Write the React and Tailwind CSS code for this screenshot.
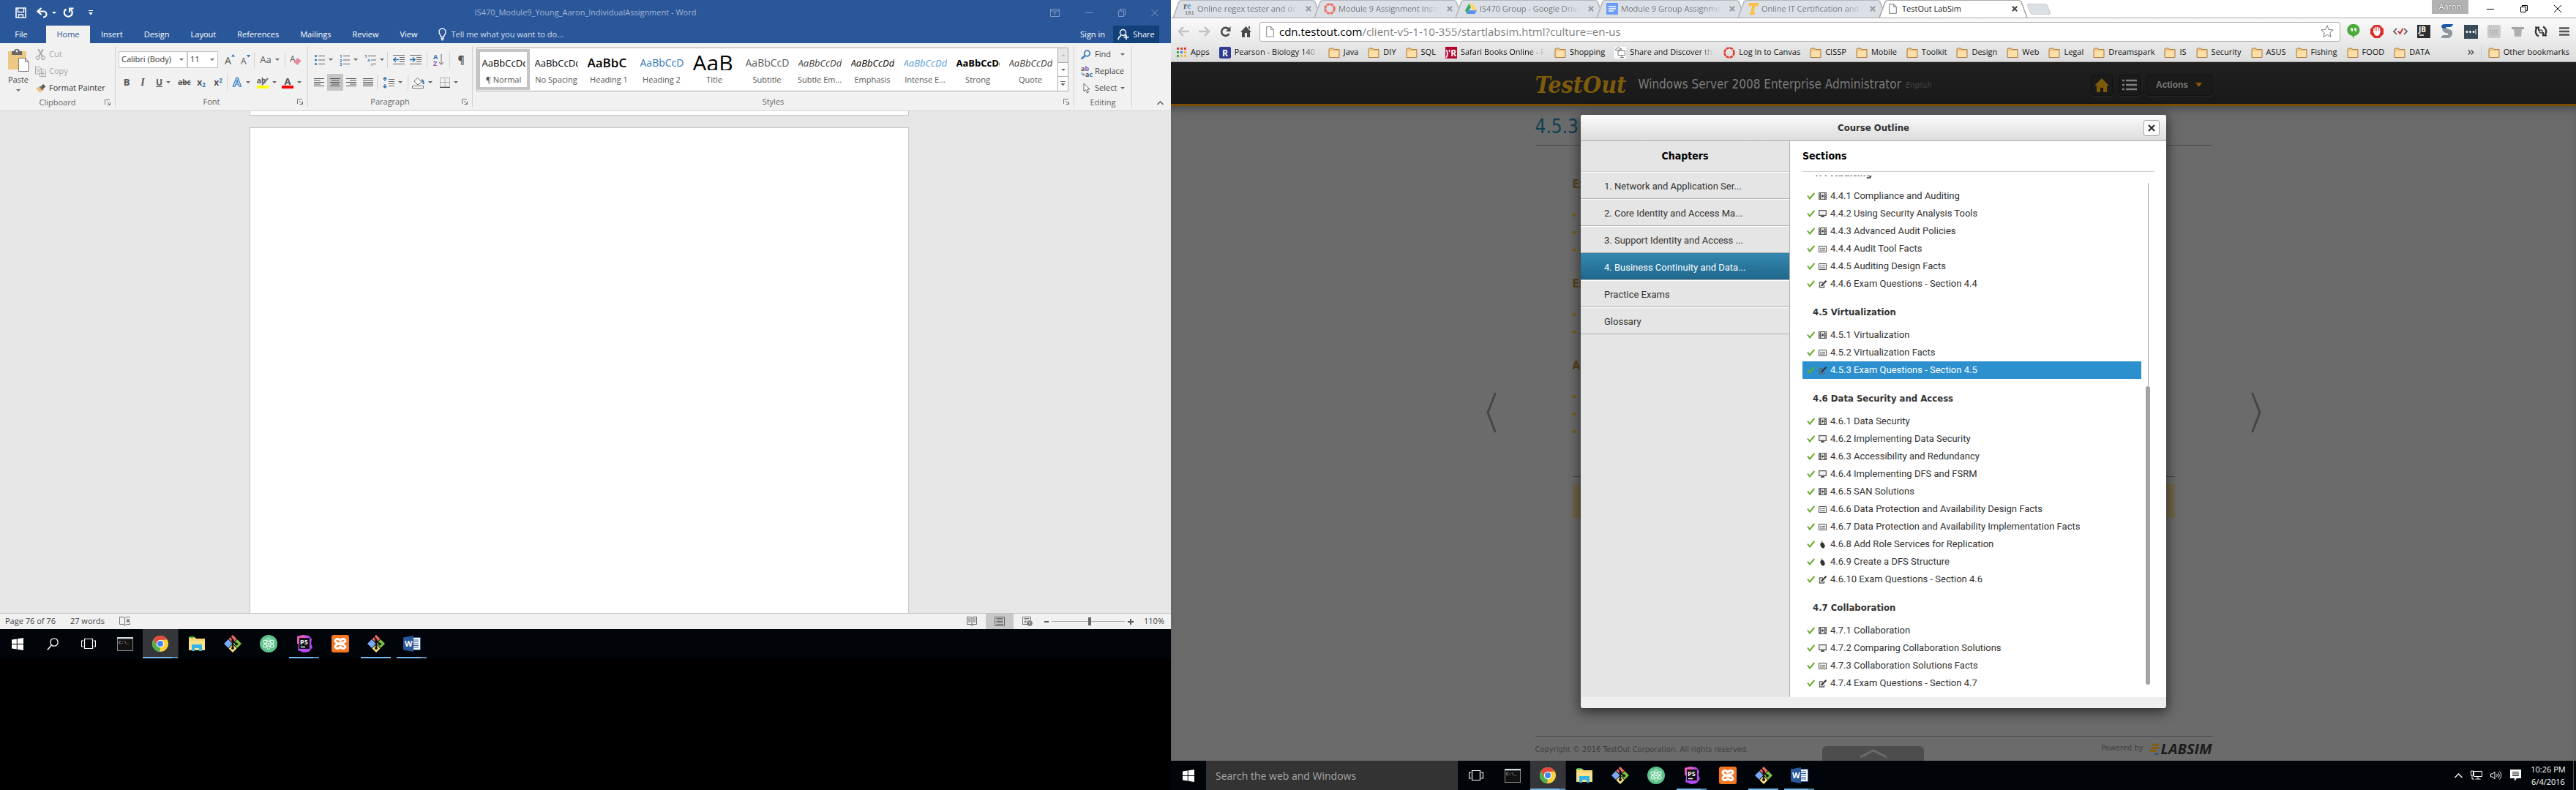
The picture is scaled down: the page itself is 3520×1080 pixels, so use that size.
import React from "react";

const UI = "font-['Open_Sans',sans-serif]";
const TAHOMA = "font-['DejaVu_Sans_Condensed','DejaVu_Sans',sans-serif]";

/* ---------- Shared small drawings ---------- */

function Caret({ className = "text-[#666]" }) {
  return (
    <svg viewBox="0 0 6 3" className={`h-[3px] w-[6px] shrink-0 ${className}`} fill="currentColor" aria-hidden="true">
      <path d="M0 0h6L3 3z" />
    </svg>
  );
}

function Svg({ w = 16, h = 16, box, className = "", children }) {
  return (
    <svg width={w} height={h} viewBox={box || `0 0 ${w} ${h}`} className={`shrink-0 ${className}`} fill="none" aria-hidden="true">
      {children}
    </svg>
  );
}

/* ---------- Word: title bar and tabs ---------- */

function WordTitle() {
  return (
    <div className="grid h-[35px] grid-cols-[1fr_auto_1fr] items-center text-white">
      <div className="flex items-center pl-[21px]">
        <button aria-label="Save" className="mr-[14px]">
          <Svg w={15} h={15}><path d="M1 1h13v13H1z" stroke="#fff" strokeWidth="1.6" /><path d="M3.5 1v5.5h8V1M4.500 14v-4h6v4" stroke="#fff" strokeWidth="1.4" /></Svg>
        </button>
        <button aria-label="Undo" className="mr-[5px]">
          <Svg w={16} h={15}><path d="M2 5.500h7.500a4 4 0 0 1 0 8H9" stroke="#fff" strokeWidth="2.200" /><path d="M6.500 1 1.500 5.500l5 4.500" stroke="#fff" strokeWidth="2.200" /></Svg>
        </button>
        <Caret className="mr-[9px] text-white" />
        <button aria-label="Redo" className="mr-[20px]">
          <Svg w={15} h={15}><path d="M4.500 2.500a5.500 5.500 0 1 0 6 .3" stroke="#fff" strokeWidth="2.200" /><path d="M9 7V1.600h5.500" stroke="#fff" strokeWidth="2" /></Svg>
        </button>
        <button aria-label="Customize Quick Access Toolbar">
          <Svg w={6} h={7}><path d="M0 .5h6" stroke="#fff" /><path d="M0 3h6L3 6.500z" fill="#fff" /></Svg>
        </button>
      </div>
      <div className="text-[11px] text-[#a3b5d3]">IS470_Module9_Young_Aaron_IndividualAssignment - Word</div>
      <div className="flex items-center justify-end gap-[35px] pr-[17px] text-[#7f99c2]">
        <button aria-label="Ribbon display options"><Svg w={13} h={11}><path d="M.5.5h12v10H.5zM.5 3h12M6.500 9V5M4.500 6.500l2-2 2 2" stroke="currentColor" /></Svg></button>
        <button aria-label="Minimize"><Svg w={10} h={11}><path d="M0 5.500h10" stroke="currentColor" /></Svg></button>
        <button aria-label="Restore"><Svg w={10} h={11}><path d="M.5 3h7v7.500h-7zM2.500 3V.5h7V8h-2" stroke="currentColor" /></Svg></button>
        <button aria-label="Close"><Svg w={10} h={11}><path d="M0 .5l10 10M10 .5l-10 10" stroke="currentColor" /></Svg></button>
      </div>
    </div>
  );
}

const wordTabs = ["Insert", "Design", "Layout", "References", "Mailings", "Review", "View"];

function WordTabs() {
  return (
    <nav className="flex h-[24px] items-stretch text-[11px] text-white">
      <button className="w-[63px] pr-[5px] text-center">File</button>
      <button className="mr-[15px] w-[60px] bg-[#f1f1f1] text-[#2a579a]">Home</button>
      <div className="flex gap-[29px]">
        {wordTabs.map((t) => <button key={t}>{t}</button>)}
      </div>
      <label className="ml-[29px] flex items-center gap-[6px] text-[#d5deeb]">
        <Svg w={11} h={18}><path d="M3.500 12.500c0-3-2.500-3.500-2.500-7a4.500 4.500 0 0 1 9 0c0 3.500-2.500 4-2.500 7zM3.500 14.500h4M4 16.500h3" stroke="#fff" strokeWidth="1.300" /></Svg>
        <input aria-label="Tell me" placeholder="Tell me what you want to do..." className="w-[200px] bg-transparent placeholder:text-[#d5deeb] outline-none" />
      </label>
      <div className="flex-1" />
      <button className="mr-[11px]">Sign in</button>
      <button className="mr-4 flex w-[63px] items-center justify-center gap-[5px] bg-[#124078]">
        <Svg w={16} h={16}><circle cx="7.500" cy="5.500" r="4" stroke="#fff" strokeWidth="1.500" /><path d="M1 15.500c0-3 1.500-4.500 4-6M9.500 9l1.500 1M12 8.500v7M8.500 12h7" stroke="#fff" strokeWidth="1.500" /></Svg>
        Share
      </button>
    </nav>
  );
}

/* ---------- Word: ribbon ---------- */

function Group({ label, className, launcher = true, children }) {
  return (
    <section aria-label={label} className={`my-1 flex flex-col border-r border-[#d4d4d4] ${className}`}>
      <div className="h-[72px]">{children}</div>
      <div className="grid grid-cols-[14px_1fr_14px] items-center text-[11px] text-[#666]">
        <span />
        <span className="text-center leading-4">{label}</span>
        {launcher && (
          <button aria-label={`${label} settings`}>
            <Svg w={8} h={8}><path d="M.5 7V.5H7M3 3l4 4M7.500 3.500v4h-4" stroke="#777" /></Svg>
          </button>
        )}
      </div>
    </section>
  );
}

const Sep = () => <span className="h-[22px] w-px shrink-0 bg-[#d4d4d4]" />;

function Tool({ label, w, caret, active, children }) {
  return (
    <button aria-label={label} className={`flex h-[23px] shrink-0 items-center justify-center gap-[5px] text-[#555] ${w} ${active ? "bg-[#c5c5c5]" : ""}`}>
      {children}
      {caret && <Caret />}
    </button>
  );
}

function Lines({ rows, stroke = "#555" }) {
  return (
    <Svg w={14} h={12}>
      {rows.map(([a, b], i) => <path key={i} d={`M${a} ${i * 2.500 + 0.5}H${b}`} stroke={stroke} />)}
    </Svg>
  );
}

function FontGroup() {
  return (
    <div className="flex flex-col gap-2 pl-1 pt-[7px]">
      <div className="flex items-center">
        <div className="relative">
          <select aria-label="Font" className="h-[23px] w-[94px] appearance-none border border-[#c6c6c6] bg-white pl-[3px] text-[11px] text-[#333]"><option>Calibri (Body)</option></select>
          <Caret className="pointer-events-none absolute right-[5px] top-[10px] text-[#666]" />
        </div>
        <div className="relative mr-[5px]">
          <select aria-label="Font size" className="h-[23px] w-[42px] appearance-none border border-[#c6c6c6] bg-white pl-[3px] text-[11px] text-[#333]"><option>11</option></select>
          <Caret className="pointer-events-none absolute right-[5px] top-[10px] text-[#666]" />
        </div>
        <Tool label="Grow font" w="w-[22px]"><Svg w={14} h={15}><text x="0" y="14" fontSize="14" fill="#555" fontFamily="Open Sans">A</text><path d="M9 3.500h5L11.500 0z" fill="#2f74b5" /></Svg></Tool>
        <Tool label="Shrink font" w="w-[22px]"><Svg w={14} h={15}><text x="0" y="14" fontSize="12" fill="#555" fontFamily="Open Sans">A</text><path d="M8 1h5l-2.500 3.500z" fill="#2f74b5" /></Svg></Tool>
        <Sep />
        <Tool label="Change case" w="w-[41px]" caret><span className="text-[13px]">Aa</span></Tool>
        <Sep />
        <Tool label="Clear formatting" w="w-[28px]"><Svg w={16} h={16}><text x="0" y="11" fontSize="12" fill="#555" fontFamily="Open Sans">A</text><path d="M10.500 5l5 4-5 6-5-4z" fill="#e8899a" /></Svg></Tool>
      </div>
      <div className="flex items-center">
        <Tool label="Bold" w="w-[22px]"><b className="text-[13px]">B</b></Tool>
        <Tool label="Italic" w="w-[22px]"><b className="font-['Liberation_Serif',serif] text-[14px] italic">I</b></Tool>
        <Tool label="Underline" w="w-[34px]" caret><b className="text-[12px] underline">U</b></Tool>
        <Tool label="Strikethrough" w="w-[24px]"><b className="text-[10px] line-through">abc</b></Tool>
        <Tool label="Subscript" w="w-[22px]"><b className="text-[12px]">x<sub className="text-[8px] text-[#2f74b5]">2</sub></b></Tool>
        <Tool label="Superscript" w="w-[24px]"><b className="text-[12px]">x<sup className="text-[8px] text-[#2f74b5]">2</sup></b></Tool>
        <Sep />
        <Tool label="Text effects" w="w-[36px]" caret><Svg w={14} h={15}><path d="M1.500 13 6 1.500h2L12.500 13H10L9 10H5l-1 3zM6 7.500h2L7 4.500z" fill="#fff" stroke="#3f7fc1" strokeWidth="1.300" /></Svg></Tool>
        <Tool label="Highlight" w="w-[34px]" caret><Svg w={16} h={16}><text x="0" y="9" fontSize="10" fontWeight="700" fill="#555" fontFamily="Open Sans">ab</text><path d="M15 2 9 9l-2 2" stroke="#777" strokeWidth="2" /><path d="M0 12h16v4H0z" fill="#ff0" /></Svg></Tool>
        <Tool label="Font color" w="w-[34px]" caret><Svg w={16} h={16}><text x="3.500" y="11" fontSize="13" fontWeight="700" fill="#555" fontFamily="Open Sans">A</text><path d="M0 12h16v4H0z" fill="#f00" /></Svg></Tool>
      </div>
    </div>
  );
}

function ListIcon({ numbers }) {
  return (
    <Svg w={14} h={16}>
      {[2.5, 8, 13.500].map((y, i) => (
        <g key={y}>
          {numbers ? <text x="0" y={y + 2.500} fontSize="6" fontWeight="700" fill="#2f74b5" fontFamily="Open Sans">{i + 1}</text> : <circle cx="1.500" cy={y} r="1.500" fill="#2f74b5" />}
          <path d={`M5 ${y}h9`} stroke="#666" />
        </g>
      ))}
    </Svg>
  );
}

function IndentIcon({ right }) {
  return (
    <Svg w={16} h={13}>
      <path d="M0 .5h16M9 3.500h7M9 6.500h7M9 9.500h7M0 12.500h16" stroke="#666" />
      <path d={right ? "M0 6.500h7M4 3.500l3 3-3 3" : "M8 6.500H1M4 3.500l-3 3 3 3"} stroke="#2f74b5" strokeWidth="1.600" />
    </Svg>
  );
}

function ParagraphGroup() {
  return (
    <div className="flex flex-col gap-2 pl-1 pt-[7px]">
      <div className="flex items-center">
        <Tool label="Bullets" w="w-[34px]" caret><ListIcon /></Tool>
        <Tool label="Numbering" w="w-[34px]" caret><ListIcon numbers /></Tool>
        <Tool label="Multilevel list" w="w-[36px]" caret><Svg w={16} h={16}><g fontSize="6" fontWeight="700" fill="#2f74b5" fontFamily="Open Sans"><text x="0" y="5">1</text><text x="4" y="10">a</text><text x="9" y="16">i</text></g><path d="M5 2.500h11M9 8h7M12 13.500h4" stroke="#666" /></Svg></Tool>
        <Sep />
        <span className="w-1" />
        <Tool label="Decrease indent" w="w-[22px]"><IndentIcon /></Tool>
        <Tool label="Increase indent" w="w-[24px]"><IndentIcon right /></Tool>
        <span className="w-[3px]" />
        <Sep />
        <Tool label="Sort" w="w-[30px]"><Svg w={14} h={16}><g fontSize="9" fontWeight="700" fontFamily="Open Sans"><text x="0" y="7" fill="#2f74b5">A</text><text x="0" y="16" fill="#8e5bb5">Z</text></g><path d="M11 0v14M8 11l3 3.500 3-3.500" stroke="#666" /></Svg></Tool>
        <Sep />
        <Tool label="Show paragraph marks" w="w-[30px]"><b className="text-[14px]">¶</b></Tool>
      </div>
      <div className="flex items-center">
        <Tool label="Align left" w="w-[22px]"><Lines rows={[[0, 14], [0, 9], [0, 14], [0, 9], [0, 14]]} /></Tool>
        <Tool label="Center" w="w-[22px]" active><Lines rows={[[0, 14], [2, 12], [0, 14], [2, 12], [0, 14]]} /></Tool>
        <Tool label="Align right" w="w-[22px]"><Lines rows={[[0, 14], [5, 14], [0, 14], [5, 14], [0, 14]]} /></Tool>
        <Tool label="Justify" w="w-[24px]"><Lines rows={[[0, 14], [0, 14], [0, 14], [0, 14], [0, 14]]} /></Tool>
        <Sep />
        <Tool label="Line spacing" w="w-[41px]" caret><Svg w={16} h={16}><path d="M3 1v5M3 10v5M.5 3.500 3 1l2.500 2.500M.5 12.500 3 15l2.500-2.500" stroke="#2f74b5" strokeWidth="1.400" /><path d="M8 3.500h8M8 6.500h8M8 9.500h8M8 12.500h8" stroke="#666" /></Svg></Tool>
        <Sep />
        <Tool label="Shading" w="w-[38px]" caret><Svg w={17} h={16}><path d="M7.500 1.500 13 7l-5 4-5-5z" stroke="#666" fill="#fff" /><path d="M13 4c2 1 3 3 2.500 6" stroke="#2f74b5" strokeWidth="2" /><path d="M.5 12.500h15v3H.5z" fill="#fff" stroke="#777" /></Svg></Tool>
        <Tool label="Borders" w="w-[34px]" caret><Svg w={14} h={14}><path d="M.5.5h13v12H.5zM7 .5v12M.5 6.500h13" stroke="#777" strokeDasharray="1 1" /><path d="M0 13.500h14" stroke="#444" /></Svg></Tool>
      </div>
    </div>
  );
}

const styleCells = [
  ["¶ Normal", "text-[13px] text-black", "AaBbCcDd"],
  ["No Spacing", "text-[13px] text-black", "AaBbCcDd"],
  ["Heading 1", "text-[17px] font-semibold text-black", "AaBbC"],
  ["Heading 2", "text-[14px] text-[#2e74b5]", "AaBbCcD"],
  ["Title", "text-[30px] text-black", "AaB"],
  ["Subtitle", "text-[14px] text-[#5a5a5a]", "AaBbCcD"],
  ["Subtle Em...", "text-[13px] italic text-[#404040]", "AaBbCcDd"],
  ["Emphasis", "text-[13px] italic text-black", "AaBbCcDd"],
  ["Intense E...", "text-[13px] italic text-[#5b9bd5]", "AaBbCcDd"],
  ["Strong", "text-[13px] font-bold text-black", "AaBbCcDd"],
  ["Quote", "text-[13px] italic text-[#404040]", "AaBbCcDd"],
];

function StylesGroup() {
  return (
    <div className="pl-[5px] pr-[7px] pt-[2px]">
      <div className="flex h-[60px] border border-[#ababab] bg-white">
        <div className="flex min-w-0 flex-1 overflow-hidden">
          {styleCells.map(([name, cls, sample], i) => (
            <button key={name} className={`flex w-[72px] shrink-0 flex-col items-center justify-center gap-[5px] ${i === 0 ? "my-px border-4 border-[#c5c5c5]" : "my-px"}`}>
              <span className={`h-[22px] w-[59px] overflow-hidden whitespace-nowrap text-left leading-[24px] ${cls}`}>{sample}</span>
              <span className="whitespace-nowrap text-[11px] leading-4 text-[#555]">{name}</span>
            </button>
          ))}
        </div>
        <div className="flex w-[14px] flex-col divide-y divide-[#ababab] border-l border-[#ababab]">
          <button aria-label="Previous styles" className="flex flex-1 items-center justify-center bg-[#e6e6e6]"><Caret className="rotate-180 text-[#bbb]" /></button>
          <button aria-label="Next styles" className="flex flex-1 items-center justify-center"><Caret /></button>
          <button aria-label="More styles" className="flex flex-1 items-center justify-center"><Svg w={7} h={7}><path d="M0 .5h7" stroke="#666" /><path d="M.5 3h6l-3 3.500z" fill="#666" /></Svg></button>
        </div>
      </div>
    </div>
  );
}

function Ribbon() {
  return (
    <div className="flex h-[93px] border-b border-[#d5d5d5] bg-[#f1f1f1] text-[11px]">
      <Group label="Clipboard" className="w-[158px] shrink-0">
        <div className="flex">
          <button className="flex w-[48px] flex-col items-center pl-[2px] pt-1 text-[#444]">
            <Svg w={29} h={31}><path d="M0 3h25v25H0z" fill="#eec882" /><path d="M5 3h3c0-4 8-4 8 0h3v5H5z" fill="#666" /><circle cx="12" cy="3" r="1.500" fill="#f1f1f1" /><path d="M14.500 12.500h9l4.500 5v13H14.500z" fill="#fff" stroke="#777" /><path d="M23.500 12.500v5H28" stroke="#777" /></Svg>
            <span className="mt-[3px] leading-4">Paste</span>
            <Caret className="mt-[5px] text-[#666]" />
          </button>
          <div className="flex flex-col text-[#a6a6a6]">
            <button className="flex h-[23px] items-center gap-1"><Svg w={15} h={15}><path d="M4 0l6 10M11 0 5 10" stroke="#aaa" strokeWidth="2" /><circle cx="3.500" cy="12" r="2.300" stroke="#aaa" strokeWidth="1.200" /><circle cx="11" cy="12" r="2.300" stroke="#aaa" strokeWidth="1.200" /></Svg>Cut</button>
            <button className="flex h-[23px] items-center gap-1"><Svg w={15} h={14}><path d="M.5.5H6L8.500 3v7h-8zM6.500 3.500H12L14.500 6v7.500h-8z" stroke="#aaa" fill="#f1f1f1" /><path d="M2 4h3M2 6h3M8.500 7.500h4M8.500 9.500h4M8.500 11.500h4" stroke="#aaa" /></Svg>Copy</button>
            <button className="flex h-[23px] items-center gap-1 text-[#333]"><Svg w={15} h={14}><path d="M8 4l3-3 3.500 3.500-4 3z" fill="#555" /><path d="M1 7l6-3 4 4-4 5z" fill="#eec07a" /><path d="M6.500 4.500 11 9" stroke="#666" strokeWidth="2" /></Svg>Format Painter</button>
          </div>
        </div>
      </Group>
      <Group label="Font" className="w-[263px] shrink-0"><FontGroup /></Group>
      <Group label="Paragraph" className="w-[225px] shrink-0"><ParagraphGroup /></Group>
      <Group label="Styles" className="min-w-0 flex-1"><StylesGroup /></Group>
      <Group label="Editing" launcher={false} className="w-[79px] shrink-0">
        <div className="flex flex-col pl-[9px] text-[#444]">
          <button className="flex h-[23px] items-center gap-[5px]"><Svg w={14} h={14}><circle cx="8.500" cy="5" r="3.800" stroke="#3f7fc1" strokeWidth="1.800" /><path d="M6 8 .5 12.500" stroke="#3f7fc1" strokeWidth="2.600" /></Svg>Find<span className="w-[3px]" /><Caret /></button>
          <button className="flex h-[23px] items-center gap-[2px]"><Svg w={17} h={16}><g fontSize="9" fontWeight="700" fontFamily="Open Sans"><text x="0" y="7" fill="#555">a<tspan fill="#8e5bb5">b</tspan></text><text x="6" y="15" fill="#555">a<tspan fill="#2f74b5">c</tspan></text></g><path d="M1.500 9v3H5M3.500 10.500 5 12l-1.500 1.500" stroke="#2f74b5" /></Svg>Replace</button>
          <button className="flex h-[23px] items-center gap-[5px]"><Svg w={14} h={15}><path d="M4 1v11l2.500-2.500L8.500 14l2-1-2-4H12z" stroke="#666" fill="#fff" /></Svg>Select<Caret /></button>
        </div>
      </Group>
      <div className="flex w-[53px] items-end justify-end pb-[7px] pr-[10px]">
        <button aria-label="Collapse the ribbon"><Svg w={9} h={6}><path d="M.5 5l4-4 4 4" stroke="#666" strokeWidth="1.600" /></Svg></button>
      </div>
    </div>
  );
}

function WordStatus() {
  return (
    <footer className="flex h-[22px] items-stretch border-t border-[#c6c6c6] bg-[#f1f1f1] text-[11px] text-[#444]">
      <div className="flex flex-1 items-center gap-5 pl-[7px]">
        <span>Page 76 of 76</span>
        <span>27 words</span>
        <Svg w={15} h={13}><path d="M7.500 2v10M7.500 2 5 .5H.5v10H5l2.500 1.500 2.500-1.500h4.500v-2M7.500 2 10 .5h4.500" stroke="#777" /><path d="M10 3.500l4 4M14 3.500l-4 4" stroke="#666" strokeWidth="1.500" /></Svg>
      </div>
      <button aria-label="Read mode" className="flex w-[38px] items-center justify-center"><Svg w={14} h={13}><path d="M7 2v11M7 1.500 5 .5H.5v10H5l2 1 2-1h4.500V.5H9zM2 3h3.500M2 5h3.500M2 7h3.500M8.500 3H12M8.500 5H12M8.500 7H12" stroke="#666" /></Svg></button>
      <button aria-label="Print layout" className="flex w-[38px] items-center justify-center bg-[#c8c8c8]"><Svg w={14} h={13}><path d="M.5.5h13v12H.5zM2.500 2.500h9M2.500 4.500h9M2.500 6.500h9M2.500 8.500h9M2.500 10.500h9" stroke="#666" /></Svg></button>
      <button aria-label="Web layout" className="flex w-[38px] items-center justify-center"><Svg w={14} h={13}><path d="M.5.5h11v10H.5zM2.500 2.500h7M2.500 4.500h5M2.500 6.500h3M2.500 8.500h3" stroke="#777" /><circle cx="10" cy="9" r="3.800" fill="#777" /><path d="M8.500 7.500l1.500 1-.5 2M11 6.500l1 1.500" stroke="#f1f1f1" /></Svg></button>
      <div className="flex items-center gap-1 pl-[4px] pr-[9px]">
        <button aria-label="Zoom out"><Svg w={6} h={10}><path d="M0 5h6" stroke="#555" strokeWidth="2" /></Svg></button>
        <input aria-label="Zoom" type="range" min="10" max="210" defaultValue="114" className="h-[11px] w-[100px] appearance-none bg-[linear-gradient(#ababab,#ababab)] bg-[length:100%_1px] bg-center bg-no-repeat [&::-webkit-slider-thumb]:h-[11px] [&::-webkit-slider-thumb]:w-[4px] [&::-webkit-slider-thumb]:appearance-none [&::-webkit-slider-thumb]:bg-[#666]" />
        <button aria-label="Zoom in"><Svg w={8} h={10}><path d="M0 5h8M4 1v8" stroke="#555" strokeWidth="2" /></Svg></button>
        <span className="w-[38px] text-right">110%</span>
      </div>
    </footer>
  );
}

/* ---------- Windows taskbar ---------- */

function GitIcon() {
  return (
    <Svg w={24} h={24}>
      <path d="M12 0l5.500 5.500-5.500 5.500-5.500-5.500z" fill="#f36a6a" /><path d="M6 6l5.500 6L6 18 0 12z" fill="#7aa8f5" /><path d="M18 6l6 6-6 6-5.500-6z" fill="#80c342" /><path d="M12 13l5.500 5.500L12 24l-5.500-5.500z" fill="#fbe27a" />
      <path d="M9 2.500 12 6v12M12 8l5 4.500" stroke="#111" strokeWidth="1.800" /><circle cx="12" cy="18" r="2" fill="#111" /><circle cx="17" cy="12.500" r="2" fill="#111" /><circle cx="12" cy="7.500" r="1.800" fill="#111" />
    </Svg>
  );
}

const apps = [
  { name: "Command Prompt", icon: <Svg w={22} h={19}><path d="M0 0h22v19H0z" fill="#8a8a8a" /><path d="M1 2.500h20V18H1z" fill="#111" /><path d="M0 0h22v2H0z" fill="#cfd8dc" /><text x="2" y="9" fontSize="6" fill="#ddd" fontFamily="Liberation Mono">C:\_</text></Svg> },
  { name: "Google Chrome", state: "active", icon: <Svg w={22} h={22}><circle cx="11" cy="11" r="11" fill="#fdd03b" /><path d="M1.500 5.500A11 11 0 0 1 20.500 5.500L11 6 6.500 13.500z" fill="#e04a3f" /><path d="M1.500 5.500 6.500 14l4.500 2.500L10 22A11 11 0 0 1 1.500 5.500z" fill="#4caf50" /><circle cx="11" cy="11" r="5.200" fill="#fff" /><circle cx="11" cy="11" r="4" fill="#4285f4" /></Svg> },
  { name: "File Explorer", icon: <Svg w={22} h={20}><path d="M0 1h8l2 2h12v16H0z" fill="#f7d774" /><path d="M1 0h6v2H1z" fill="#39b54a" /><path d="M0 6h22v12H0z" fill="#fbe08b" /><path d="M4 11h14v9h-4v-4H8v4H4z" fill="#30b4ee" /></Svg> },
  { name: "Git Bash", icon: <GitIcon /> },
  { name: "Atom", icon: <Svg w={24} h={24}><circle cx="12" cy="12" r="12" fill="#5fc28c" /><g stroke="#e8fff2" strokeWidth="1"><ellipse cx="12" cy="12" rx="3" ry="8" /><ellipse cx="12" cy="12" rx="3" ry="8" transform="rotate(60 12 12)" /><ellipse cx="12" cy="12" rx="3" ry="8" transform="rotate(-60 12 12)" /></g><circle cx="12" cy="12" r="1.300" fill="#fff" /></Svg> },
  { name: "PhpStorm", state: "multi", icon: <Svg w={24} h={24}><path d="M2 2 10 0l8 1 4 5-1 6 2 5-5 6-7 1-8-3 1-7-2-6z" fill="#b74af7" /><path d="M2 2 10 0l5 2L8 12H2z" fill="#e35bb4" /><path d="M5 4h14v15H5z" fill="#111" /><text x="6" y="12.500" fontSize="9" fontWeight="700" fill="#fff" fontFamily="Open Sans">PS</text><path d="M7 16.500h6" stroke="#fff" strokeWidth="1.500" /></Svg> },
  { name: "XAMPP", icon: <Svg w={24} h={24}><rect width="24" height="24" rx="3" fill="#f37623" /><g stroke="#fff" strokeWidth="3"><path d="M12 9.500c0-5-7-5-7-1.500 0 3 7 5 7 4s7-1 7-4c0-3.500-7-3.500-7 1.500z" /><path d="M12 14.500c0 5-7 5-7 1.500 0-3 7-5 7-4s7 1 7 4c0 3.500-7 3.500-7-1.500z" /></g></Svg> },
  { name: "Git GUI", state: "open", icon: <GitIcon /> },
  { name: "Word", state: "multi", icon: <Svg w={24} h={22}><path d="M12 2.500h11.500v17H12z" fill="#fff" stroke="#2a579a" /><path d="M14 6h7M14 8.500h7M14 11h7M14 13.500h7M14 16h7" stroke="#2a579a" /><path d="M0 2.500 14 0v22L0 19.500z" fill="#2a579a" /><text x="2" y="15" fontSize="11" fontWeight="700" fill="#fff" fontFamily="Open Sans">W</text></Svg> },
];

function AppButton({ name, icon, state }) {
  return (
    <button aria-label={name} className={`relative flex w-[49px] shrink-0 items-center justify-center ${state === "active" ? "border-r border-[#222] bg-[#35363a]" : ""}`}>
      {icon}
      {state && (
        <span className={`absolute bottom-0 flex h-[2px] ${state === "active" ? "inset-x-0" : "inset-x-1"}`}>
          <span className="flex-1 bg-[#76b9ed]" />
          {state !== "open" && <span className="w-2 bg-[#5a8db5]" />}
        </span>
      )}
    </button>
  );
}

function Taskbar({ search, tray }) {
  return (
    <div className="flex h-10 shrink-0 items-stretch bg-[#010408]">
      <button aria-label="Start" className="flex w-[48px] items-center justify-center"><Svg w={16} h={17}><path d="M0 2.500 6.800 1.500V8H0zM7.800 1.300 16 0v8H7.800zM0 9h6.800v6.500L0 14.500zM7.800 9H16v8l-8.200-1.300z" fill="#fff" /></Svg></button>
      {search ? (
        <input aria-label="Search the web and Windows" placeholder="Search the web and Windows" className="w-[344px] bg-[#333] px-[13px] text-[14px] outline-none placeholder:text-[#a8a8a8]" />
      ) : (
        <button aria-label="Search" className="flex w-[48px] items-center justify-center"><Svg w={16} h={17}><circle cx="10" cy="6" r="5.200" stroke="#fff" strokeWidth="1.300" /><path d="M6.500 10 .8 16.500" stroke="#fff" strokeWidth="1.400" /></Svg></button>
      )}
      <button aria-label="Task view" className="flex w-[50px] items-center justify-center"><Svg w={20} h={14}><path d="M4.500.5h11v13h-11zM3 3H.5v8H3M17 3h2.500v8H17" stroke="#fff" strokeWidth="1.200" /></Svg></button>
      {apps.map((a) => <AppButton key={a.name} {...a} />)}
      {tray && (
        <div className="ml-auto flex items-center text-white">
          <div className="flex items-center gap-[11px] pr-[10px]">
            <Svg w={11} h={7}><path d="M.5 6 5.500 1l5 5" stroke="#fff" strokeWidth="1.300" /></Svg>
            <Svg w={16} h={14}><path d="M4.500 1.500h11v7h-11zM10 8.500v3M6.500 12h7M.5 1v6h3V1zM2 7v5h3" stroke="#fff" /></Svg>
            <Svg w={16} h={14}><path d="M.5 5H3l3-3v10L3 9H.5zM8.500 5c1 1 1 3 0 4M10.500 3c2 2 2 6 0 8M12.500 1.500c3 3 3 8 0 11" stroke="#fff" /></Svg>
            <Svg w={15} h={16}><path d="M0 0h15v12H9l-3 4v-4H0z" fill="#fff" /><path d="M3 3.500h9M3 6h9M3 8.500h9" stroke="#111" /></Svg>
          </div>
          <div className="w-[54px] text-center text-[11px] leading-[17px]"><div>10:26 PM</div><div>6/4/2016</div></div>
          <button aria-label="Show desktop" className="ml-[7px] h-10 w-[4px] border-l border-[#555]" />
        </div>
      )}
    </div>
  );
}

/* ---------- Chrome ---------- */

const fade = "[mask-image:linear-gradient(to_right,black_82%,transparent)]";
const tabIcons = {
  regex: <Svg w={16} h={18}><text x="1" y="9" fontSize="12" fontWeight="700" fill="#666" fontFamily="Liberation Serif">r<tspan fill="#5b9bd5">e</tspan></text><text x="3" y="17" fontSize="7" fontWeight="700" fill="#888" fontFamily="Liberation Mono">101</text></Svg>,
  canvas: <Svg w={16} h={16}><circle cx="8" cy="8" r="6.300" stroke="#ef6b60" strokeWidth="3" strokeDasharray="3.950 1" /></Svg>,
  drive: <Svg w={16} h={14}><path d="M5.300 0h5.400L16 9.300h-5.300z" fill="#fcd462" /><path d="M5.300 0 8 4.700 2.700 14 0 9.300z" fill="#3aa675" /><path d="M5.500 9.300H16L13.300 14H2.700z" fill="#5a8ff0" /></Svg>,
  docs: <Svg w={16} h={16}><path d="M0 0h16v16H0z" fill="#6a9df5" /><path d="M3 5h10M3 8h10M3 11h7" stroke="#fff" strokeWidth="1.400" /></Svg>,
  testout: <Svg w={15} h={16}><path d="M2 0h13l-1 5h-2l-.3-1.500h-1.400L8.500 13H10l-.5 3H2.500L3 13h1.500L6.300 3.500H5L3.500 5h-2z" fill="#fdbf3d" /></Svg>,
  file: <Svg w={11} h={14}><path d="M.7.7h6l3.600 3.600v9H.7zM6.700.7v3.600h3.600" stroke="#777" fill="#fff" /></Svg>,
};

const tabs = [
  ["regex", "Online regex tester and debugger"],
  ["canvas", "Module 9 Assignment Instructions"],
  ["drive", "IS470 Group - Google Drive"],
  ["docs", "Module 9 Group Assignment"],
  ["testout", "Online IT Certification and Training"],
];

function Tab({ icon, title, active }) {
  const c = active
    ? "z-10 text-[#222] before:border-[#aaa] before:bg-white after:border-[#aaa] after:bg-white"
    : "text-[#777] before:border-[#b4b8bd] before:bg-[#dbe0e7] after:border-[#b4b8bd] after:bg-[#dbe0e7]";
  return (
    <div className={`relative isolate -mr-[10px] flex h-6 w-[203px] shrink-0 items-center gap-1 pl-[14px] before:absolute before:inset-y-0 before:left-0 before:-z-10 before:w-1/2 before:origin-bottom before:-skew-x-[20deg] before:rounded-tl-[4px] before:border-l-2 before:border-t after:absolute after:inset-y-0 after:right-0 after:-z-10 after:w-1/2 after:origin-bottom after:skew-x-[20deg] after:rounded-tr-[4px] after:border-r-2 after:border-t ${c}`}>
      {tabIcons[icon]}
      <button className={`overflow-hidden whitespace-nowrap text-left ${active ? "ml-[3px] w-[140px]" : `w-[138px] ${fade}`}`}>{title}</button>
      <button aria-label={`Close ${title}`}><Svg w={8} h={8} className="ml-[6px]"><path d="M.8.8l6.400 6.400M7.200.8.800 7.200" stroke={active ? "#444" : "#999"} strokeWidth="2" /></Svg></button>
    </div>
  );
}

function ChromeTabs() {
  return (
    <div className="flex h-6 items-stretch bg-white pl-[2px] text-[11px]">
      {tabs.map(([i, t]) => <Tab key={t} icon={i} title={t} />)}
      <Tab icon="file" title="TestOut LabSim" active />
      <button aria-label="New tab" className="ml-[12px] mt-[5px] h-[15px] w-[28px] skew-x-[20deg] rounded-[3px] border border-[#c5c9ce] bg-[#dbe0e7]" />
      <div className="ml-auto flex items-start">
        <div className="mr-[25px] h-[19px] w-[50px] bg-[#b2b2b2] text-center leading-[18px] text-white [text-shadow:0_0_2px_#333]">Aaron</div>
        <div className="flex items-center gap-[36px] pr-[20px] pt-[7px]">
          <button aria-label="Minimize"><Svg w={10} h={10}><path d="M0 5.500h10" stroke="#000" /></Svg></button>
          <button aria-label="Restore"><Svg w={10} h={10}><path d="M.5 2.500h7v7h-7zM2.500 2.500v-2h7v7h-2" stroke="#000" /></Svg></button>
          <button aria-label="Close"><Svg w={10} h={10}><path d="M0 0l10 10M10 0 0 10" stroke="#000" /></Svg></button>
        </div>
      </div>
    </div>
  );
}

const extensions = [
  ["Hangouts", <Svg w={18} h={20}><path d="M9 0a8 8 0 0 1 1 16l-1.500 4-1-4A8 8 0 0 1 9 0z" fill="#4caa3a" /><path d="M5 5.500h3V9L6.500 11V8.500H5zM10 5.500h3V9l-1.500 2V8.500H10z" fill="#fff" /></Svg>],
  ["AdBlock", <Svg w={18} h={18}><path d="M5.500 0h7L18 5.500v7L12.500 18h-7L0 12.500v-7z" fill="#e02b2b" /><path d="M5 9V5.500M7.500 9V3.500M10 9V3.500M12.500 9.500V5" stroke="#fff" strokeWidth="1.800" strokeLinecap="round" /><path d="M4.200 8.500h9.200c0 4-1.400 6.500-4.400 6.500s-4.800-3-4.800-6.500z" fill="#fff" /></Svg>],
  ["Validator", <Svg w={20} h={12}><path d="M5 2 1 6l4 4M15 2l4 4-4 4" stroke="#555" strokeWidth="1.600" /><path d="M7 5.500 9.500 9l4-7" stroke="#c33" strokeWidth="2" /></Svg>],
  ["JetBrains", <Svg w={18} h={18}><path d="M0 0h18v18H0z" fill="#2b2d2f" /><text x="2" y="9.500" fontSize="10" fontWeight="700" fill="#fff" fontFamily="Open Sans">JB</text><path d="M3 14h6" stroke="#fff" strokeWidth="1.500" /></Svg>],
  ["Session manager", <Svg w={18} h={20}><path d="M17 0c-1 3-2 4-6 4H7l2 3C3 7 1 5 1 3s2-3 5-3z" fill="#1b56a8" /><path d="M6 5.500l4 1c4 1 7 3 6 7-.5 3-3 5.500-6 5.500H1c0-2.500 1-4 4-4h4c2 0 2-2 0-2.500C4 11.500 2 9 2.500 6z" fill="#8d979c" /></Svg>],
  ["LastPass", <Svg w={19} h={19}><path d="M0 0h19v19H0z" fill="#3a4a56" /><circle cx="4" cy="9.500" r="1.500" fill="#fff" /><circle cx="8.500" cy="9.500" r="1.500" fill="#fff" /><circle cx="13" cy="9.500" r="1.500" fill="#fff" /><path d="M16 6v7" stroke="#fff" /></Svg>],
  ["Keyboard", <Svg w={18} h={18}><rect width="18" height="18" rx="3" fill="#c9c9c9" /><path d="M3 7.500h12M3 10h12M5 13h8" stroke="#aaa" strokeDasharray="2 1" strokeWidth="1.500" /></Svg>],
  ["Top hat", <Svg w={17} h={14}><path d="M0 1h17v3H0z" fill="#a5a5a5" /><path d="M3 4h11l-1 10H4z" fill="#b0b0b0" /></Svg>],
  ["Refresh tabs", <Svg w={18} h={18}><path d="M6 15.500A7 7 0 0 1 4 4M12 2.500A7 7 0 0 1 14 14" stroke="#333" strokeWidth="2.200" /><path d="M1 3.500h5V8M17 14.500h-5V10" stroke="#333" strokeWidth="2" /><circle cx="9" cy="9" r="2" stroke="#555" strokeWidth="1.500" /></Svg>],
  ["Menu", <Svg w={14} h={14}><path d="M1 2.500h12M1 7h12M1 11.500h12" stroke="#555" strokeWidth="2.600" strokeLinecap="round" /></Svg>],
];

function Toolbar() {
  return (
    <div className="flex h-[34px] items-center pl-[9px] pt-[2px]">
      <div className="flex items-center gap-[13px]">
        <button aria-label="Back"><Svg w={16} h={14}><path d="M8 1 2 7l6 6M2 7h14" stroke="#c4c4c4" strokeWidth="2.500" /></Svg></button>
        <button aria-label="Forward"><Svg w={16} h={14}><path d="M8 1l6 6-6 6M14 7H0" stroke="#c4c4c4" strokeWidth="2.500" /></Svg></button>
        <button aria-label="Reload"><Svg w={15} h={15}><path d="M12.500 10A5.500 5.500 0 1 1 12 4" stroke="#4a4a4a" strokeWidth="2.600" /><path d="M14.500 0v7H8z" fill="#4a4a4a" /></Svg></button>
        <button aria-label="Home"><Svg w={15} h={15}><path d="M7.500 0 15 8h-2v7H9V9H6v6H2V8H0zM11 0h2v4l-2-2z" fill="#4a4a4a" /></Svg></button>
      </div>
      <label className="ml-[11px] flex h-[27px] flex-1 items-center gap-[7px] rounded-[3px] border border-[#b0b0b0] bg-white px-[8px] text-[15px] text-[#808080]">
        <Svg w={11} h={15}><path d="M.7.7h6l3.600 3.600v10H.7zM6.700.7v3.600h3.600" stroke="#888" /></Svg>
        <span contentEditable suppressContentEditableWarning role="textbox" aria-label="Address" className="flex-1 whitespace-nowrap outline-none"><span className="text-black">cdn.testout.com</span>/client-v5-1-10-355/startlabsim.html?culture=en-us</span>
        <Svg w={18} h={18}><path d="M9 1l2.300 5.400 5.900.5-4.500 3.900 1.400 5.700L9 13.400l-5.100 3.100 1.400-5.700L.8 6.900l5.900-.5z" stroke="#777" /></Svg>
      </label>
      <div className="ml-[2px] flex">
        {extensions.map(([n, i]) => <button key={n} aria-label={n} className="flex h-6 w-8 items-center justify-center">{i}</button>)}
      </div>
    </div>
  );
}

const Folder = () => (
  <Svg w={16} h={14}><path d="M1 2.500 2 1h4.500l1 1.500H15v11H1z" fill="#f3c987" stroke="#a97c46" /><path d="M2 5h12v8H2z" fill="#fde0a8" /></Svg>
);

const bookmarks = [
  ["Pearson - Biology 140 Lab", <Svg w={16} h={16}><rect width="16" height="16" rx="2" fill="#2f3c8f" /><text x="4" y="12.500" fontSize="12" fontWeight="700" fill="#fff" fontFamily="Open Sans">R</text></Svg>, true],
  ["Java"], ["DIY"], ["SQL"],
  ["Safari Books Online - Pro", <Svg w={16} h={16}><path d="M0 0h16v16H0z" fill="#b5062d" /><text x="0" y="13" fontSize="12" fontWeight="700" fill="#fff" fontFamily="Open Sans">)'R</text></Svg>, true],
  ["Shopping"],
  ["Share and Discover the World", <Svg w={16} h={16}><path d="M0 0h16v16H0z" fill="#fff" /><path d="M1 4l4-3 5 2-5 2zM5 5.500h9.500v6H5zM8 14.500h5M10 12v2" stroke="#777" /></Svg>, true],
  ["Log In to Canvas", <Svg w={16} h={16}><circle cx="8" cy="8" r="6.500" stroke="#e23b2e" strokeWidth="2.600" strokeDasharray="4.100 1" /></Svg>],
  ["CISSP"], ["Mobile"], ["Toolkit"], ["Design"], ["Web"], ["Legal"], ["Dreamspark"], ["IS"], ["Security"], ["ASUS"], ["Fishing"], ["FOOD"], ["DATA"],
];

function Bookmark({ label, icon, clipped }) {
  return (
    <a href="#bookmark" className="flex shrink-0 items-center gap-[5px] whitespace-nowrap">
      {icon || <Folder />}
      <span className={clipped ? `w-[115px] overflow-hidden ${fade}` : ""}>{label}</span>
    </a>
  );
}

function BookmarksBar() {
  const dots = ["#e23b2e", "#e23b2e", "#e23b2e", "#3aa757", "#3b7de0", "#f5b82e", "#3aa757", "#f5b82e", "#f5b82e"];
  return (
    <nav className="flex h-[25px] items-center gap-[13px] pl-2 pr-[9px] text-[11px] text-[#111]">
      <a href="#apps" className="flex items-center gap-[6px]">
        <Svg w={13} h={13}>{dots.map((d, i) => <path key={i} d={`M${(i % 3) * 5} ${Math.floor(i / 3) * 5}h3v3h-3z`} fill={d} />)}</Svg>
        Apps
      </a>
      {bookmarks.map(([l, i, c]) => <Bookmark key={l} label={l} icon={i} clipped={c} />)}
      <button aria-label="More bookmarks" className="ml-auto -mr-[4px]"><Svg w={9} h={7}><path d="M.7.5l3 3-3 3M4.700.5l3 3-3 3" stroke="#555" strokeWidth="1.500" /></Svg></button>
      <span className="-mr-[4px] h-5 w-px bg-[#c5cdd5]" />
      <Bookmark label="Other bookmarks" />
    </nav>
  );
}

/* ---------- TestOut page ---------- */

function TestOutHeader() {
  const btn = "flex h-[29px] items-center justify-center rounded-[3px] border border-[#111] bg-[#1a1a1a] shadow-[0_1px_0_#2b2b2b]";
  return (
    <header className="h-[60px] border-b-[3px] border-[#7a4d00] bg-gradient-to-b from-[#202020] to-[#191919]">
      <div className="mx-auto flex h-full w-[925px] items-center pt-[5px]">
        <div className="font-['DejaVu_Serif_Condensed','DejaVu_Serif',serif] text-[32px] font-bold italic leading-8 text-[#7d5a0c]">TestOut</div>
        <div className={`ml-4 text-[17px] text-[#7c7c7c] ${TAHOMA}`}>Windows Server 2008 Enterprise Administrator</div>
        <div className={`ml-[6px] pt-[3px] text-[11px] italic text-[#444] ${TAHOMA}`}>English</div>
        <div className="ml-auto flex gap-2">
          <button aria-label="Home" className={`${btn} w-[30px]`}><Svg w={20} h={19}><path d="M10 0l10 10h-3v9h-5v-6H8v6H3v-9H0z" fill="#7d5a0c" /></Svg></button>
          <button aria-label="Outline" className={`${btn} w-[30px]`}><Svg w={20} h={16}><path d="M0 2h3M0 8h3M0 14h3M5 2h15M5 8h15M5 14h15" stroke="#808080" strokeWidth="2.600" /></Svg></button>
          <button className={`${btn} w-[90px] gap-[10px] font-['Liberation_Sans',sans-serif] text-[12px] font-bold text-[#7c7c7c]`}>Actions<Svg w={9} h={6}><path d="M0 0h9L4.500 6z" fill="#8a5a00" /></Svg></button>
        </div>
      </div>
    </header>
  );
}

function Covered({ title, count }) {
  return (
    <section>
      <h2 className="h-[54px] pt-[14px] text-[15px] font-bold leading-5 text-[#54421c]">{title}</h2>
      <ul>
        {Array.from({ length: count }, (_, i) => <li key={i} className="flex h-6 items-center"><span className="h-1 w-1 bg-[#7d5a0c]" /></li>)}
      </ul>
    </section>
  );
}

function NavArrow({ label, flip }) {
  return (
    <button aria-label={label} className="self-center pb-6"><Svg w={16} h={58} className={flip ? "-scale-x-100" : ""}><path d="M13.500 2 3 29l10.500 27" stroke="#474747" strokeWidth="3" /></Svg></button>
  );
}

function TestOutPage() {
  return (
    <div className={`flex flex-1 flex-col bg-[#6b6b6b] shadow-[inset_0_10px_12px_-6px_#4a4a4a] ${TAHOMA}`}>
      <div className="flex flex-1 justify-center gap-[52px]">
        <NavArrow label="Previous" />
        <main className="w-[925px]">
          <h1 className="h-[54px] border-b border-[#484848] pt-[10px] text-[26px] leading-9 text-[#0f3f52]">4.5.3</h1>
          <div className="flex flex-col gap-[10px] px-[51px] pt-[29px]">
            <Covered title="Ex" count={3} />
            <Covered title="Ex" count={2} />
            <Covered title="A" count={3} />
          </div>
          <div className="mx-[51px] mt-[49px] border-t border-[#484848] pt-[10px]"><div className="h-[46px] bg-[#6f6549]" /></div>
        </main>
        <NavArrow label="Next" flip />
      </div>
      <footer className="mx-auto grid h-[34px] w-[925px] grid-cols-3 items-center border-t border-[#484848] text-[11px] text-[#3f3f3f]">
        <span className="whitespace-nowrap pt-1">Copyright © 2016 TestOut Corporation. All rights reserved.</span>
        <button aria-label="Show panel" className="flex h-5 w-[139px] items-center justify-center self-end justify-self-center rounded-t-[6px] bg-[#4d4d4d]"><Svg w={40} h={12}><path d="M2 11 20 2l18 9" stroke="#6b6b6b" strokeWidth="3" /></Svg></button>
        <span className="flex items-center justify-end gap-2 whitespace-nowrap">
          Powered by
          <span className="flex items-center">
            <Svg w={16} h={16}><path d="M4 2h9M2 6.500h11M0 10.500h9" stroke="#8a5a00" strokeWidth="2.400" /><path d="M7 14.500h6" stroke="#2a5d80" strokeWidth="2.400" /></Svg>
            <b className="font-['Open_Sans',sans-serif] text-[20px] italic leading-5 text-[#1c1c1c]">LABSIM</b>
          </span>
        </span>
      </footer>
    </div>
  );
}

/* ---------- Course outline dialog ---------- */

const Check = () => (
  <Svg w={11} h={10}><path d="M1 4.500 4 8.500 10.300 1" stroke="#6aaa2a" strokeWidth="2" /></Svg>
);

const kindIcons = {
  video: <Svg w={11} h={10}><path d="M0 0h11v10H0z" fill="#555" /><path d="M3 1h5v8H3z" fill="#ddd" /><path d="M1.500 1v8M9.500 1v8" stroke="#ddd" strokeDasharray="1.200 1.300" /><path d="M4.500 3 7.500 5l-3 2z" fill="#222" /></Svg>,
  demo: <Svg w={11} h={10}><path d="M.7.7h9.600v6.600H.7z" stroke="#555" strokeWidth="1.200" fill="#f4f4f4" /><path d="M3 9h5" stroke="#333" strokeWidth="1.600" /></Svg>,
  facts: <Svg w={11} h={9}><path d="M.5.5h10v8H.5z" stroke="#555" fill="#eee" /><path d="M2 3.500h2M5 3.500h4M2 6h7" stroke="#666" /></Svg>,
  exam: <Svg w={11} h={11}><path d="M6 3H1.500v7h6V7" stroke="#666" strokeWidth="1.400" /><path d="M4 7.500 10.500.8" stroke="#333" strokeWidth="2" /><path d="M3 8.500 4.500 5l2 2z" fill="#333" /></Svg>,
  lab: <Svg w={11} h={11}><path d="M5 3C5 1 4 1 3.500.5" stroke="#333" /><ellipse cx="5.500" cy="6.500" rx="2.800" ry="4" transform="rotate(-25 5.500 6.500)" fill="#333" /></Svg>,
};

const sections = [
  ["4.4 Auditing", [["video", "4.4.1 Compliance and Auditing"], ["demo", "4.4.2 Using Security Analysis Tools"], ["video", "4.4.3 Advanced Audit Policies"], ["facts", "4.4.4 Audit Tool Facts"], ["facts", "4.4.5 Auditing Design Facts"], ["exam", "4.4.6 Exam Questions - Section 4.4"]]],
  ["4.5 Virtualization", [["video", "4.5.1 Virtualization"], ["facts", "4.5.2 Virtualization Facts"], ["exam", "4.5.3 Exam Questions - Section 4.5", true]]],
  ["4.6 Data Security and Access", [["video", "4.6.1 Data Security"], ["demo", "4.6.2 Implementing Data Security"], ["video", "4.6.3 Accessibility and Redundancy"], ["demo", "4.6.4 Implementing DFS and FSRM"], ["video", "4.6.5 SAN Solutions"], ["facts", "4.6.6 Data Protection and Availability Design Facts"], ["facts", "4.6.7 Data Protection and Availability Implementation Facts"], ["lab", "4.6.8 Add Role Services for Replication"], ["lab", "4.6.9 Create a DFS Structure"], ["exam", "4.6.10 Exam Questions - Section 4.6"]]],
  ["4.7 Collaboration", [["video", "4.7.1 Collaboration"], ["demo", "4.7.2 Comparing Collaboration Solutions"], ["facts", "4.7.3 Collaboration Solutions Facts"], ["exam", "4.7.4 Exam Questions - Section 4.7"]]],
];

const chapters = ["1. Network and Application Ser...", "2. Core Identity and Access Ma...", "3. Support Identity and Access ...", "4. Business Continuity and Data...", "Practice Exams", "Glossary"];

function CourseOutline() {
  return (
    <div role="dialog" aria-label="Course Outline" className="flex h-full w-[800px] flex-col overflow-hidden rounded-[3px] bg-[#efefef] shadow-[0_4px_16px_2px_rgba(0,0,0,0.55)]">
      <div className="grid h-[36px] grid-cols-[1fr_auto_1fr] items-center border-b border-[#ababab] bg-gradient-to-b from-[#fbfbfb] to-[#dcdcdc]">
        <span />
        <h2 className={`text-[13px] font-bold text-[#333] ${TAHOMA}`}>Course Outline</h2>
        <button aria-label="Close" className="mr-[9px] flex h-[22px] w-[22px] items-center justify-center justify-self-end rounded-[3px] border border-[#a5a5a5] bg-white"><Svg w={10} h={10}><path d="M1 1l8 8M9 1 1 9" stroke="#222" strokeWidth="2" /></Svg></button>
      </div>
      <div className="flex min-h-0 flex-1">
        <div className="flex w-[286px] shrink-0 flex-col border-r border-[#b0b0b0] bg-[#e5e5e5]">
          <h3 className={`flex h-[42px] items-center justify-center border-b border-[#cfcfcf] text-[14px] font-bold text-black ${TAHOMA}`}>Chapters</h3>
          {chapters.map((c, i) => (
            <button key={c} className={`h-[37px] border-b border-t border-b-[#b0b0b0] pl-8 pt-[2px] text-left ${i === 3 ? "border-t-[#3583aa] bg-gradient-to-b from-[#3487b0] to-[#1f678b] text-white" : "border-t-white text-[#333]"}`}>{c}</button>
          ))}
        </div>
        <div className="flex min-w-0 flex-1 flex-col bg-white pl-[17px] pr-4">
          <h3 className={`flex h-[42px] shrink-0 items-center border-b border-[#cfcfcf] text-[14px] font-bold text-black ${TAHOMA}`}>Sections</h3>
          <div className="mt-[5px] flex min-h-0 flex-1 overflow-hidden">
            <div className="-mt-[30px] flex-1">
              {sections.map(([title, items]) => (
                <section key={title}>
                  <h4 className={`flex h-[46px] items-center pl-[14px] pt-2 text-[13px] font-bold text-[#333] ${TAHOMA}`}>{title}</h4>
                  <ul>
                    {items.map(([kind, label, current]) => (
                      <li key={label} className={current ? "bg-[#2b90cd] text-white" : "text-[#333]"}>
                        <a href="#section" className="flex h-6 items-center gap-[5px] pl-[6px]"><Check />{kindIcons[kind]}{label}</a>
                      </li>
                    ))}
                  </ul>
                </section>
              ))}
            </div>
            <div className="mb-[17px] ml-[6px] mr-[6px] mt-[10px] flex w-[6px] flex-col items-center">
              <span className="h-[278px] w-px bg-[#a8a8a8]" />
              <span className="w-full flex-1 rounded-full bg-[#a3a3a3]" />
            </div>
          </div>
        </div>
      </div>
      <div className="h-[15px] shrink-0" />
    </div>
  );
}

export default function App() {
  return (
    <div className={`grid min-h-screen grid-cols-[5fr_6fr] bg-black ${UI}`}>
      <div className="flex min-w-0 flex-col pb-[180px]">
        <div className="flex flex-1 flex-col">
          <div className="bg-[#2a579a]"><WordTitle /><WordTabs /></div>
          <Ribbon />
          <div className="flex flex-1 flex-col items-center gap-4 overflow-hidden bg-[#e6e6e6] pr-[18px]">
            <div className="h-[6px] w-[901px] border-x border-b border-[#c6c6c6] bg-white" />
            <div className="w-[901px] flex-1 border-x border-t border-[#c6c6c6] bg-white" />
          </div>
          <WordStatus />
        </div>
        <Taskbar />
      </div>
      <div className="flex min-w-0 flex-col">
        <ChromeTabs />
        <div className="border-b border-t border-[#aaa] bg-gradient-to-b from-[#fafafa] to-[#dcdcdc]">
          <Toolbar />
          <BookmarksBar />
        </div>
        <div className="relative flex flex-1 flex-col">
          <TestOutHeader />
          <TestOutPage />
          <div className="absolute inset-0 flex justify-center py-[72px] font-['Roboto',sans-serif] text-[13px]"><CourseOutline /></div>
        </div>
        <Taskbar search tray />
      </div>
    </div>
  );
}
